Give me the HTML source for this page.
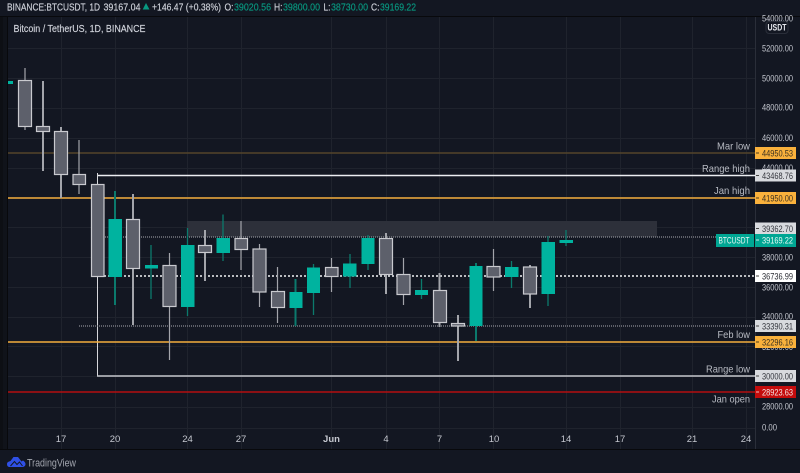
<!DOCTYPE html>
<html><head><meta charset="utf-8"><style>
html,body{margin:0;padding:0;background:#131722;width:800px;height:473px;overflow:hidden}
svg{display:block}
text{font-family:"Liberation Sans",sans-serif;font-size:10px}
.g{stroke:#1f232d;stroke-width:1;fill:none}
.ax{fill:#c4c7cf}
.ax text{font-size:9.5px}
.lb{fill:#b8bbc3;font-size:10.5px;text-anchor:end}
.gb{fill:#5d606b;stroke:#c9cacf;stroke-width:1.2}
.gw{stroke:#a3a5ab;fill:none}
.tb{fill:#00b39f}
.tw{stroke:#0b7a6d;fill:none}
.h{fill:#d1d4dc;font-size:10.5px;stroke:#d1d4dc;stroke-width:.15}
.t{fill:#089981;font-size:10.5px;stroke:#089981;stroke-width:.15}
.v{font-size:9.5px}
</style></head><body>
<svg width="800" height="473" viewBox="0 0 800 473" xmlns="http://www.w3.org/2000/svg">
<rect width="800" height="473" fill="#131722"/>
<rect x="0" y="0" width="7" height="473" fill="#10131a"/>
<rect x="0" y="0" width="3" height="473" fill="#0d0f14"/>
<rect x="0" y="0" width="800" height="16" fill="#131722"/>
<rect x="0" y="450" width="800" height="23" fill="#131722"/>

<!-- grid -->
<path class="g" d="M61.5 17V449M115.5 17V449M187.5 17V449M241.5 17V449M331.5 17V449M386.5 17V449M439.5 17V449M493.5 17V449M566.5 17V449M620.5 17V449M692.5 17V449M746.5 17V449"/>
<path class="g" d="M8 48.5H755M8 78.5H755M8 108.5H755M8 138.5H755M8 168.5H755M8 197.5H755M8 227.5H755M8 257.5H755M8 287.5H755M8 317.5H755M8 346.5H755M8 376.5H755M8 407.5H755M8 428.5H755"/>

<!-- frame -->
<path d="M0 16.5H800M7.5 16V449.5M0 449.5H800" stroke="#08090c" fill="none"/>
<path d="M755.5 17V449" stroke="#2a2e39" fill="none"/>

<!-- zone -->
<rect x="187" y="221" width="470" height="16" fill="#2d303a"/>

<!-- horizontal levels -->
<path d="M8 153H755" stroke="#54452b" stroke-width="1.4"/>
<path d="M97 175.5H755" stroke="#eceef2" stroke-width="1.4"/>
<path d="M97.5 173V376.5" stroke="#d6d7db" stroke-width="1"/>
<path d="M8 198H755" stroke="#f4ad3c" stroke-width="1.4"/>
<path d="M97 237H755" stroke="#8a8c94" stroke-width="1.2" stroke-dasharray="1 1"/>
<path d="M104 276H755" stroke="#f2f3f5" stroke-width="1.6" stroke-dasharray="2 2"/>
<path d="M79 326H755" stroke="#8a8c94" stroke-width="1.2" stroke-dasharray="1 1"/>
<path d="M8 342H755" stroke="#f4ad3c" stroke-width="1.4"/>
<path d="M97 376H755" stroke="#c6c8cd" stroke-width="1.4"/>
<path d="M8 392H755" stroke="#b30f0f" stroke-width="1.6"/>

<!-- left stub -->
<rect x="8" y="81" width="5" height="3" class="tb"/>

<!-- gray wicks -->
<g class="gw" stroke-width="1.2">
<path d="M25 68V130"/>
<path stroke-width="2" d="M43 81V171"/>
<path stroke-width="2" d="M61 127V198"/>
<path d="M79 140V194"/>
<path stroke-width="2" d="M133 194V325"/>
<path d="M169.5 253V360"/>
<path stroke-width="2" d="M205 230V281"/>
<path d="M241 221V270"/>
<path d="M259.5 244V307"/>
<path d="M277.5 267V323"/>
<path d="M331.5 258V292"/>
<path stroke-width="2" d="M386 233V294"/>
<path d="M403.5 258V305"/>
<path stroke-width="2" d="M439.5 273V327"/>
<path stroke-width="2" d="M458 315V361"/>
<path d="M493.5 249V291"/>
<path stroke-width="2" d="M530 265V308"/>
</g>
<!-- green wicks -->
<g class="tw" stroke-width="1.3">
<path stroke-width="2" d="M115 191V305"/>
<path d="M151 245V299"/>
<path d="M187.5 228V316"/>
<path d="M223 214.5V261"/>
<path stroke-width="2" d="M295.5 279V326"/>
<path d="M313.5 264V315"/>
<path d="M350 254V288"/>
<path d="M368 235V270"/>
<path d="M421.5 279V299"/>
<path stroke-width="2" d="M476 263V341"/>
<path d="M511.5 261V288"/>
<path d="M548 236V306"/>
<path d="M566 230V246"/>
</g>
<!-- gray bodies -->
<rect class="gb" x="18.5" y="80.5" width="13" height="46"/>
<rect class="gb" x="36.5" y="126.5" width="13" height="5"/>
<rect class="gb" x="54.5" y="131.5" width="13" height="43"/>
<rect class="gb" x="73" y="174.5" width="12.5" height="10"/>
<rect class="gb" x="91.5" y="184.5" width="12.5" height="92"/>
<rect class="gb" x="126.5" y="219.5" width="13" height="49"/>
<rect class="gb" x="163" y="265.5" width="13" height="41"/>
<rect class="gb" x="198.5" y="245.5" width="13" height="7"/>
<rect class="gb" x="235" y="238.5" width="12.5" height="11"/>
<rect class="gb" x="253" y="249" width="13" height="43"/>
<rect class="gb" x="271.5" y="291.5" width="13" height="16"/>
<rect class="gb" x="325.5" y="267.5" width="12.5" height="9"/>
<rect class="gb" x="379.5" y="238.5" width="13" height="36"/>
<rect class="gb" x="397" y="274.5" width="13" height="20"/>
<rect class="gb" x="433.5" y="290.5" width="13" height="32"/>
<rect class="gb" x="451.5" y="323.5" width="13" height="2.5"/>
<rect class="gb" x="487" y="266.5" width="13" height="10.5"/>
<rect class="gb" x="523.5" y="267" width="13" height="27"/>
<!-- green bodies -->
<rect class="tb" x="108.5" y="219" width="13.5" height="58"/>
<rect class="tb" x="145" y="265" width="13" height="3.5"/>
<rect class="tb" x="181" y="245" width="13.5" height="62"/>
<rect class="tb" x="216.5" y="238" width="13.5" height="15"/>
<rect class="tb" x="289.5" y="292" width="13" height="16"/>
<rect class="tb" x="307" y="267.5" width="13" height="25.5"/>
<rect class="tb" x="343" y="263.5" width="13.5" height="13"/>
<rect class="tb" x="361.5" y="238" width="13" height="26"/>
<rect class="tb" x="415" y="290" width="13" height="5"/>
<rect class="tb" x="469.5" y="266" width="13" height="60"/>
<rect class="tb" x="505" y="267" width="13.5" height="10"/>
<rect class="tb" x="541.5" y="242" width="13.5" height="52"/>
<rect class="tb" x="559.5" y="240" width="13.5" height="3"/>

<!-- header -->
<text x="7" y="10.500" class="h" textLength="93" lengthAdjust="spacingAndGlyphs">BINANCE:BTCUSDT, 1D</text>
<text x="103.500" y="10.500" class="h" textLength="37" lengthAdjust="spacingAndGlyphs">39167.04</text>
<path d="M146 3L149.500 9.500H142.700Z" fill="#089981"/>
<text x="152" y="10.500" class="h" textLength="69" lengthAdjust="spacingAndGlyphs">+146.47 (+0.38%)</text>
<text x="224.500" y="10.500" class="h" textLength="9" lengthAdjust="spacingAndGlyphs">O:</text><text x="234" y="10.500" class="t" textLength="37" lengthAdjust="spacingAndGlyphs">39020.56</text>
<text x="274" y="10.500" class="h" textLength="8.500" lengthAdjust="spacingAndGlyphs">H:</text><text x="283" y="10.500" class="t" textLength="37" lengthAdjust="spacingAndGlyphs">39800.00</text>
<text x="323.500" y="10.500" class="h" textLength="7" lengthAdjust="spacingAndGlyphs">L:</text><text x="331" y="10.500" class="t" textLength="37" lengthAdjust="spacingAndGlyphs">38730.00</text>
<text x="371" y="10.500" class="h" textLength="8.500" lengthAdjust="spacingAndGlyphs">C:</text><text x="380" y="10.500" class="t" textLength="36" lengthAdjust="spacingAndGlyphs">39169.22</text>

<text x="13.500" y="32" fill="#d1d4dc" stroke="#d1d4dc" stroke-width=".15" style="font-size:10.500px" textLength="132" lengthAdjust="spacingAndGlyphs">Bitcoin / TetherUS, 1D, BINANCE</text>

<!-- price axis labels -->
<g class="ax">
<text x="762" y="21.500" textLength="31" lengthAdjust="spacingAndGlyphs">54000.00</text>
<text x="762" y="51.500" textLength="31" lengthAdjust="spacingAndGlyphs">52000.00</text>
<text x="762" y="81.500" textLength="31" lengthAdjust="spacingAndGlyphs">50000.00</text>
<text x="762" y="110.500" textLength="31" lengthAdjust="spacingAndGlyphs">48000.00</text>
<text x="762" y="141" textLength="31" lengthAdjust="spacingAndGlyphs">46000.00</text>
<text x="762" y="171" textLength="31" lengthAdjust="spacingAndGlyphs">44000.00</text>
<text x="762" y="260.500" textLength="31" lengthAdjust="spacingAndGlyphs">38000.00</text>
<text x="762" y="290.500" textLength="31" lengthAdjust="spacingAndGlyphs">36000.00</text>
<text x="762" y="319.500" textLength="31" lengthAdjust="spacingAndGlyphs">34000.00</text>
<text x="762" y="350" textLength="31" lengthAdjust="spacingAndGlyphs">32000.00</text>
<text x="762" y="409.500" textLength="31" lengthAdjust="spacingAndGlyphs">28000.00</text>
<text x="762" y="430.500" textLength="15" lengthAdjust="spacingAndGlyphs">0.00</text>
</g>
<rect x="766" y="21.500" width="22" height="12" rx="3" fill="#131722" stroke="#2a2e39"/>
<text x="767.500" y="30.500" fill="#e6e8ee" style="font-size:9px;font-weight:bold" textLength="19" lengthAdjust="spacingAndGlyphs">USDT</text>

<!-- price tags -->
<rect x="755" y="147" width="41" height="12" fill="#f9b13c"/><path d="M756 153H759" stroke="#4a3a1a"/><text class="v" x="762" y="156.500" fill="#3a3020" textLength="31" lengthAdjust="spacingAndGlyphs">44950.53</text>
<rect x="755" y="169.500" width="41" height="12" fill="#d8dade"/><path d="M756 175.500H759" stroke="#444"/><text class="v" x="762" y="179" fill="#33353c" textLength="31" lengthAdjust="spacingAndGlyphs">43468.76</text>
<rect x="755" y="192" width="41" height="12" fill="#f9b13c"/><path d="M756 198H759" stroke="#4a3a1a"/><text class="v" x="762" y="201.500" fill="#3a3020" textLength="31" lengthAdjust="spacingAndGlyphs">41950.00</text>
<rect x="755" y="222.500" width="41" height="12" fill="#d8dade"/><path d="M756 228.500H759" stroke="#444"/><text class="v" x="762" y="232" fill="#33353c" textLength="31" lengthAdjust="spacingAndGlyphs">39362.70</text>
<rect x="716" y="234" width="38" height="13" fill="#00a693"/><text class="v" x="718.500" y="243.500" fill="#e8f5f3" textLength="31" lengthAdjust="spacingAndGlyphs">BTCUSDT</text>
<rect x="755" y="234" width="41" height="13" fill="#00a693"/><path d="M756 240H759" stroke="#d0f0ec"/><text class="v" x="762" y="243.500" fill="#eafaf7" textLength="31" lengthAdjust="spacingAndGlyphs">39169.22</text>
<rect x="755" y="270" width="41" height="12" fill="#ffffff"/><path d="M756 276H759" stroke="#444"/><text class="v" x="762" y="279.500" fill="#2a2c33" textLength="31" lengthAdjust="spacingAndGlyphs">36736.99</text>
<rect x="755" y="320" width="41" height="12" fill="#d8dade"/><path d="M756 326H759" stroke="#444"/><text class="v" x="762" y="329.500" fill="#33353c" textLength="31" lengthAdjust="spacingAndGlyphs">33390.31</text>
<rect x="755" y="336" width="41" height="12" fill="#f9b13c"/><path d="M756 342H759" stroke="#4a3a1a"/><text class="v" x="762" y="345.500" fill="#3a3020" textLength="31" lengthAdjust="spacingAndGlyphs">32296.16</text>
<rect x="755" y="370" width="41" height="12" fill="#d8dade"/><path d="M756 376H759" stroke="#444"/><text class="v" x="762" y="379.500" fill="#33353c" textLength="31" lengthAdjust="spacingAndGlyphs">30000.00</text>
<rect x="755" y="386" width="41" height="12" fill="#c40c0c"/><path d="M756 392H759" stroke="#f0c0c0"/><text class="v" x="762" y="395.500" fill="#f4e6e6" textLength="31" lengthAdjust="spacingAndGlyphs">28923.63</text>

<!-- line labels -->
<text x="717" y="149.500" class="lb" style="text-anchor:start" textLength="33" lengthAdjust="spacingAndGlyphs">Mar low</text>
<text x="702" y="172" class="lb" style="text-anchor:start" textLength="48" lengthAdjust="spacingAndGlyphs">Range high</text>
<text x="714" y="194" class="lb" style="text-anchor:start" textLength="36" lengthAdjust="spacingAndGlyphs">Jan high</text>
<text x="717.500" y="338" class="lb" style="text-anchor:start" textLength="32.500" lengthAdjust="spacingAndGlyphs">Feb low</text>
<text x="706" y="372.500" class="lb" style="text-anchor:start" textLength="44" lengthAdjust="spacingAndGlyphs">Range low</text>
<text x="712" y="402.500" class="lb" style="text-anchor:start" textLength="38" lengthAdjust="spacingAndGlyphs">Jan open</text>

<!-- time axis -->
<g class="ax" text-anchor="middle">
<text x="61" y="442">17</text>
<text x="115" y="442">20</text>
<text x="187.500" y="442">24</text>
<text x="241" y="442">27</text>
<text x="331.500" y="442" font-weight="bold">Jun</text>
<text x="386" y="442">4</text>
<text x="439.500" y="442">7</text>
<text x="494" y="442">10</text>
<text x="566" y="442">14</text>
<text x="620" y="442">17</text>
<text x="692" y="442">21</text>
<text x="746" y="442">24</text>
</g>

<!-- logo -->
<path d="M7 464C7 462 9 461.500 10.500 461L13.500 457H18L21.500 461.500L23 460.500C25 462 25.500 463 25.500 464C25.500 466 24 467 22 467H10C8 467 7 466 7 464Z" fill="#2f50e6"/>
<path d="M10.500 466L14.500 461.500L17 464.500L19.500 462L22.500 466" fill="none" stroke="#131722" stroke-width="1"/>
<text x="27" y="466.500" fill="#a3a6af" style="font-size:11px" textLength="49" lengthAdjust="spacingAndGlyphs">TradingView</text>
</svg>
</body></html>
